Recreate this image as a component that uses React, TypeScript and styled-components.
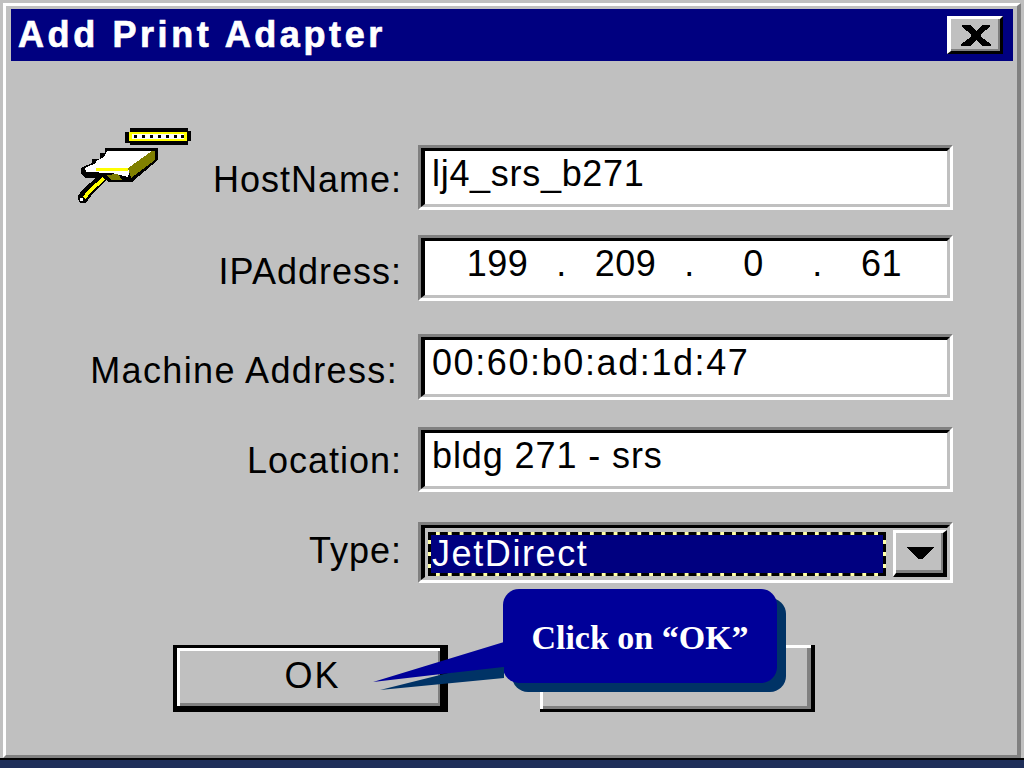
import React from 'react';
import styled, { createGlobalStyle } from 'styled-components';

const GlobalStyle = createGlobalStyle`
  html, body {
    margin: 0;
    padding: 0;
    background: #c0c0c0;
  }
`;

function AdapterIcon() {
  return (
    <IconSvg viewBox="78 128 114 76" width="114" height="76" shapeRendering="crispEdges">
      <polygon fill="#000" points="130,128 188,128 188,131 191,131 191,141 188,141 188,145 130,145 130,143 125,143 125,132 130,132" />
      <rect x="129" y="132" width="58" height="9" fill="#ffff00" />
      <rect x="132" y="134" width="52" height="5" fill="#fff" />
      {[134, 142, 150, 158, 166, 174, 181].map(x => (
        <rect key={x} x={x} y="135" width="3" height="3" fill="#000" />
      ))}
      <polygon fill="#000" points="105,148 158,148 158,160 132,182 108,182 104,178 86,178 81,174 81,168 92,163 92,159 100,159 100,153 105,153" />
      <polygon fill="#fff" points="107,151 152,151 130,168 128,177 112,173 86,172 85,168 96,163 96,161 104,157" />
      <polygon fill="#808000" points="152,151 155,151 155,160 131,178 128,168" />
      <rect x="96" y="168" width="32" height="3" fill="#ffff00" />
      <polygon fill="#808000" points="106,175 118,174 122,180 112,180" />
      <polygon fill="#000" points="77,197 84,188 102,173 108,178 93,193 86,203 80,203" />
      <polygon fill="#ffff00" points="88,190 103,177 105,180 90,193 86,199 83,197" />
      <rect x="80" y="198" width="3" height="3" fill="#fff" />
    </IconSvg>
  );
}

export default function App() {
  return (
    <Page>
      <GlobalStyle />
      <Frame>
        <TitleBar>
          <Title>Add Print Adapter</Title>
          <CloseButton>
            <svg width="30" height="21" viewBox="0 0 30 21" shapeRendering="crispEdges">
              <polygon
                fill="#000"
                points="1,0 9,0 15,6 21,0 29,0 29,2 20,9 20,12 30,19 30,21 21,21 15,15 9,21 0,21 0,19 10,12 10,9 1,2"
              />
            </svg>
          </CloseButton>
        </TitleBar>

        <Form>
          <Row>
            <Label $top={4}>
              <AdapterIcon />
              <span>HostName:</span>
            </Label>
            <Field>
              <FieldInner $spacing={0.7}>lj4_srs_b271</FieldInner>
            </Field>
          </Row>

          <Row $gap={25} $height={66}>
            <Label $top={8}>IPAddress:</Label>
            <Field>
              <FieldInner $ip>
                <Octet>199</Octet>
                <Dot>.</Dot>
                <Octet>209</Octet>
                <Dot>.</Dot>
                <Octet>0</Octet>
                <Dot>.</Dot>
                <Octet>61</Octet>
              </FieldInner>
            </Field>
          </Row>

          <Row $gap={33} $height={66}>
            <Label $top={8} $inset={4} $wide>Machine Address:</Label>
            <Field>
              <FieldInner $spacing={1.6}>00:60:b0:ad:1d:47</FieldInner>
            </Field>
          </Row>

          <Row $gap={27}>
            <Label $top={2}>Location:</Label>
            <Field>
              <FieldInner $spacing={0.9}>bldg 271 - srs</FieldInner>
            </Field>
          </Row>

          <Row $gap={30} $height={61}>
            <Label $bottom={4}>Type:</Label>
            <Field>
              <ComboInner>
                <Selection>
                  <SelectionFill>JetDirect</SelectionFill>
                </Selection>
                <ComboButton>
                  <svg width="28" height="13" viewBox="0 0 28 13" shapeRendering="crispEdges">
                    <polygon fill="#000" points="0,0 28,0 16,12 12,12" />
                  </svg>
                </ComboButton>
              </ComboInner>
            </Field>
          </Row>

          <Buttons>
            <DialogButton $default>OK</DialogButton>
            <DialogButton />
          </Buttons>
        </Form>
      </Frame>
      <BottomStrip />

      <Callout>
        <Tail viewBox="0 0 140 60" width="140" height="60">
          <polygon fill="#003366" points="7,51 131,39 131,20" />
          <polygon fill="#000099" points="0,43 131,3 140,3 140,27 60,36" />
        </Tail>
        <CalloutText>Click on “OK”</CalloutText>
      </Callout>
    </Page>
  );
}

const Page = styled.div`
  position: relative;
  width: 1024px;
  height: 768px;
  padding: 3px 3px 0 3px;
  box-sizing: border-box;
  display: flex;
  flex-direction: column;
  background: #c0c0c0;
  overflow: hidden;
  font-family: 'Liberation Sans', Arial, sans-serif;
  color: #000;
`;

const Frame = styled.div`
  flex: 1;
  min-height: 0;
  box-sizing: border-box;
  padding: 3px 4px 0 5px;
  border-style: solid;
  border-width: 3px 4px 3px 3px;
  border-color: #fff #808080 #808080 #fff;
  background: #c0c0c0;
`;

const BottomStrip = styled.div`
  height: 10px;
  margin: 0 -3px;
  flex-shrink: 0;
  box-sizing: border-box;
  border-top: 2px solid #000;
  background: #1f2f5a;
`;

const TitleBar = styled.div`
  height: 52px;
  display: flex;
  align-items: center;
  justify-content: space-between;
  padding: 0 10px 0 7px;
  background: #000080;
`;

const Title = styled.div`
  font-size: 36px;
  font-weight: bold;
  letter-spacing: 3.6px;
  color: #fff;
  -webkit-text-stroke: 0.7px #fff;
`;

const CloseButton = styled.div`
  width: 56px;
  height: 38px;
  box-sizing: border-box;
  display: flex;
  align-items: center;
  justify-content: center;
  background: #c0c0c0;
  border-style: solid;
  border-width: 3px 3px 3px 4px;
  border-color: #fff #000 #000 #fff;
  box-shadow: inset -2px -2px 0 #808080;
`;

const Form = styled.div`
  margin: 84px 0 0 67px;
`;

const Row = styled.div<{ $gap?: number; $height?: number }>`
  display: grid;
  grid-template-columns: 324px 535px;
  column-gap: 16px;
  height: ${p => p.$height || 65}px;
  margin-top: ${p => p.$gap || 0}px;
`;

const Label = styled.div<{ $top?: number; $bottom?: number; $inset?: number; $wide?: boolean }>`
  display: flex;
  align-items: center;
  justify-content: flex-end;
  padding-top: ${p => p.$top || 0}px;
  padding-bottom: ${p => p.$bottom || 0}px;
  padding-right: ${p => p.$inset || 0}px;
  font-size: 36px;
  letter-spacing: ${p => (p.$wide ? 1.35 : 1)}px;
  white-space: nowrap;
`;

const IconSvg = styled.svg`
  flex-shrink: 0;
  align-self: flex-start;
  margin: -21px auto 0 0;
`;

const Field = styled.div`
  box-sizing: border-box;
  display: flex;
  border-style: solid;
  border-width: 3px;
  border-color: #808080 #fff #fff #808080;
`;

const FieldInner = styled.div<{ $ip?: boolean; $spacing?: number }>`
  flex: 1;
  box-sizing: border-box;
  display: flex;
  align-items: center;
  padding: 0 0 8px ${p => (p.$ip ? 20 : 7)}px;
  border-style: solid;
  border-width: 3px 3px 3px 4px;
  border-color: #000 #c0c0c0 #c0c0c0 #000;
  background: #fff;
  font-size: 36px;
  letter-spacing: ${p => p.$spacing || 0.5}px;
  white-space: nowrap;
`;

const Octet = styled.span`
  width: 105px;
  text-align: center;
`;

const Dot = styled.span`
  width: 23px;
  text-align: center;
`;

const ComboInner = styled.div`
  flex: 1;
  box-sizing: border-box;
  display: flex;
  align-items: flex-start;
  border-style: solid;
  border-width: 3px 3px 3px 4px;
  border-color: #000 #c0c0c0 #c0c0c0 #000;
  background: #c0c0c0;
`;

const Selection = styled.div`
  width: 458px;
  height: 44px;
  box-sizing: border-box;
  margin: 4px 0 0 3px;
  display: flex;
  border: 4px dashed #000;
  background: #ffffa8;
`;

const SelectionFill = styled.div`
  flex: 1;
  display: flex;
  align-items: center;
  padding-left: 1px;
  background: #000080;
  color: #fff;
  font-size: 36px;
  letter-spacing: 1.6px;
  margin: -1px;
`;

const ComboButton = styled.div`
  width: 54px;
  height: 47px;
  margin: 2px 0 0 7px;
  box-sizing: border-box;
  display: flex;
  align-items: center;
  justify-content: center;
  background: #c0c0c0;
  border-style: solid;
  border-width: 3px 4px 4px 3px;
  border-color: #fff #000 #000 #fff;
  box-shadow: inset -2px -3px 0 #808080;
`;

const Buttons = styled.div`
  display: flex;
  gap: 92px;
  margin: 62px 0 0 95px;
`;

const DialogButton = styled.div<{ $default?: boolean }>`
  width: 275px;
  height: 67px;
  box-sizing: border-box;
  display: flex;
  align-items: center;
  justify-content: center;
  padding-left: ${p => (p.$default ? 8 : 0)}px;
  padding-bottom: ${p => (p.$default ? 3 : 0)}px;
  font-size: 36px;
  letter-spacing: 2px;
  background: #c0c0c0;
  border-style: solid;
  border-color: #000;
  border-width: ${p => (p.$default ? '3px 8px 6px 4px' : '0 4px 3px 0')};
  box-shadow: inset 3px 3px 0 #fff, inset ${p => (p.$default ? '-2px -3px' : '-4px -3px')} 0 #808080;
`;

const Callout = styled.div`
  position: absolute;
  left: 503px;
  top: 589px;
  width: 274px;
  height: 94px;
  box-sizing: border-box;
  padding-top: 3px;
  display: flex;
  align-items: center;
  justify-content: center;
  border-radius: 16px;
  background: #000099;
  box-shadow: 9px 9px 0 #003366;
`;

const Tail = styled.svg`
  position: absolute;
  left: -130px;
  top: 50px;
  overflow: visible;
`;

const CalloutText = styled.div`
  position: relative;
  font-family: 'Liberation Serif', 'Times New Roman', serif;
  font-size: 34px;
  font-weight: bold;
  color: #fff;
  white-space: nowrap;
`;
